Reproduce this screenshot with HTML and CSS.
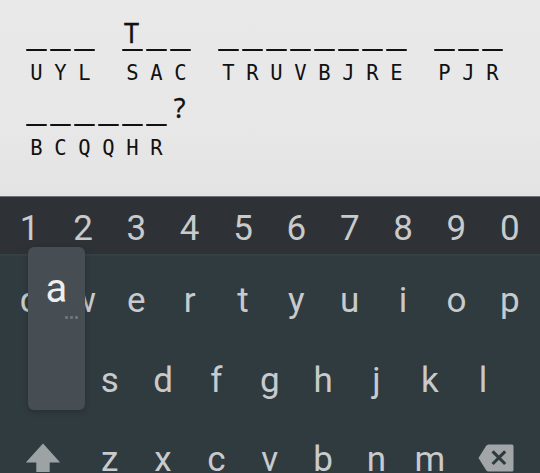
FILE: index.html
```
<!DOCTYPE html>
<html lang="en">
<head>
<meta charset="utf-8">
<title>Cryptogram</title>
<link rel="stylesheet" href="styles.css">
</head>
<body>
<main class="puzzle" id="puzzle"></main>
<section class="keyboard">
  <div class="row digits" data-keys="1234567890"></div>
  <div class="row" data-keys="qwertyuiop"></div>
  <div class="row middle" data-keys="asdfghjkl"></div>
  <div class="row bottom">
    <span class="wide"><svg class="shift" viewBox="0 0 36 29"><path d="M18 0.5 35.2 19.5H24.7V29H11.3V19.5H0.8Z"/></svg></span>
    <div class="row letters" data-keys="zxcvbnm"></div>
    <span class="wide"><svg class="erase" viewBox="0 0 36 28"><path class="tag" d="M10.5 0.5H34Q35.5 0.5 35.5 2V26Q35.5 27.5 34 27.5H10.5Q9 27.5 8 26L0.5 14 8 2Q9 .5 10.5 .5Z"/><path class="cross" d="M14.6 7.3 27.2 20M27.2 7.3 14.6 20"/></svg></span>
  </div>
  <div class="popup"><span class="popup-key">a</span><span class="dots"><i></i><i></i><i></i></span></div>
</section>
<script src="script.js"></script>
</body>
</html>
```
FILE: styles.css
```
* { box-sizing: border-box; }
body {
  margin: 0;
  width: 540px;
  height: 473px;
  overflow: hidden;
  background: #303b40;
}
.puzzle {
  height: 196px;
  padding: 14px 0 0 26px;
  background: linear-gradient(#e9e9e9, #e7e7e7 70%, #e3e3e3);
  color: #111;
  font-family: "DejaVu Sans Mono", monospace;
}
.line { display: flex; gap: 24px; height: 75px; }
.word { display: flex; }
.cell { width: 24px; display: flex; flex-direction: column; }
.guess {
  width: 19px;
  height: 37.4px;
  font: 27px/37px "Noto Sans", sans-serif;
  -webkit-text-stroke: .3px #111;
  text-align: center;
}
.blank { position: relative; }
.blank::after {
  content: "";
  position: absolute;
  left: 0;
  bottom: 0;
  width: 21px;
  height: 2.5px;
  border-radius: 1px;
  background: #111;
}
.code {
  width: 21px;
  margin-top: 9px;
  font-size: 20.5px;
  line-height: 26px;
  text-align: center;
}
.keyboard {
  position: relative;
  height: 277px;
  overflow: hidden;
  border-top: 1px solid #6e7275;
  background: #303b40;
  color: #c8cacc;
  font: 35px/80px Roboto, sans-serif;
}
.row { display: flex; height: 80px; padding: 0 2.5px 0 3px; }
.key { width: 53.35px; text-align: center; }
.digits {
  height: 59px;
  line-height: 64px;
  background: #2e3236;
  border-bottom: 2px solid #354046;
}
.digits + .row { line-height: 89px; }
.middle { padding: 0 29.7px; line-height: 89px; }
.bottom { height: 57px; line-height: 24px; }
.letters { height: 57px; padding: 31.5px 0 0; }
.wide { width: 80px; display: flex; justify-content: center; }
.shift { width: 36px; height: 29px; margin-top: 27px; fill: #9da2a5; }
.erase { width: 36px; height: 28px; margin-top: 28px; }
.tag { fill: #a2a6a9; }
.cross { fill: none; stroke: #303b40; stroke-width: 3.1; }
.popup {
  position: absolute;
  left: 28px;
  top: 50px;
  width: 57px;
  height: 163px;
  border-radius: 6px;
  background: #464e54;
  box-shadow: 0 2px 5px rgba(20, 28, 34, .35);
  display: flex;
  flex-direction: column;
}
.popup-key { color: #eee; font-size: 40px; line-height: 84px; height: 69px; text-align: center; }
.dots { display: flex; gap: 2px; justify-content: flex-end; padding-right: 7px; }
.dots i { width: 3px; height: 3px; background: #70777c; border-radius: 1px; }
```
FILE: script.js
```
const lines = [
  [["UYL", ""], ["SAC", "T"], ["TRUVBJRE", ""], ["PJR", ""]],
  [["BCQQHR", "", "?"]]
];
function add(parent, className, text = "") {
  const element = document.createElement("span");
  element.className = className;
  element.textContent = text;
  parent.append(element);
  return element;
}
for (const words of lines) {
  const line = add(document.getElementById("puzzle"), "line");
  for (const [code, guess, mark] of words) {
    const word = add(line, "word");
    [...code].forEach((letter, i) => {
      const cell = add(word, "cell");
      add(cell, "guess blank", guess[i] || "");
      add(cell, "code", letter);
    });
    if (mark) add(add(word, "cell"), "guess", mark);
  }
}
document.querySelectorAll("[data-keys]").forEach(row => {
  for (const key of row.dataset.keys) add(row, "key", key);
});
```
